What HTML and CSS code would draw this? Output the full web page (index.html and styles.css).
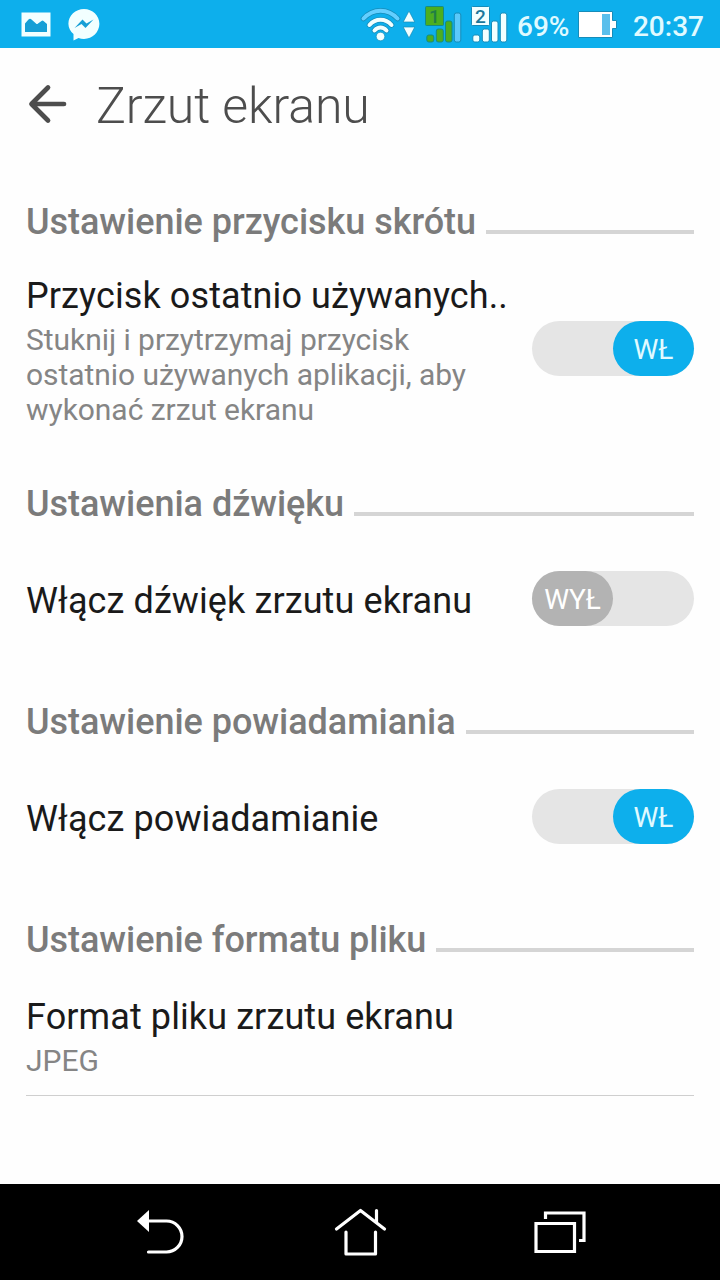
FILE: index.html
```html
<!DOCTYPE html>
<html lang="pl">
<head>
<meta charset="UTF-8">
<meta name="viewport" content="width=device-width, initial-scale=1.0">
<title>Zrzut ekranu</title>
<link rel="stylesheet" href="styles.css">
</head>
<body>

<div class="screen">
    <div class="status-bar">
        <svg class="icon-gallery" width="30" height="25" viewBox="0 0 30 25">
            <path fill="#f2ffff" d="M.5 .5H29.500V24.500H.5Z"/>
            <path fill="#159fd6" d="M4 20V11.500L7.500 7.500Q9 6 10.500 7.500L15 11.500Q16 12.500 17 11.500L20.500 9Q21.500 8 22.500 9L26 12V20Z"/>
        </svg>
        <svg class="icon-messenger" width="32" height="33" viewBox="0 0 32 33">
            <path fill="#f2ffff" d="M16 1C7.500 1 .4 7.500 .4 15.800C.4 20 2.500 23.500 5.500 26V32.500L10.500 30C12.200 30.600 14 30.900 16 30.900C24.500 30.900 31.400 24 31.400 15.800C31.400 7.500 24.500 1 16 1Z"/>
            <path fill="#159fd6" d="M6.500 20L14.500 11.500L18.500 15.500L25.500 11.500L17.500 20L13.500 16Z"/>
        </svg>
        <svg class="icon-wifi" width="56" height="36" viewBox="0 0 56 36">
            <g fill="none" stroke-linecap="round">
                <path stroke="#168cb9" stroke-width="5.500" d="M3.500 12.500C13 2 28 2 37.500 12.500M9.500 19C15.500 12 25.500 12 31.500 19M14.500 24.500C18 20.500 23 20.500 26.500 24.500"/>
                <path stroke="#63cfff" stroke-width="4" d="M3.500 12.500C13 2 28 2 37.500 12.500"/>
                <path stroke="#f2ffff" stroke-width="4" d="M9.500 19C15.500 12 25.500 12 31.500 19M14.500 24.500C18 20.500 23 20.500 26.500 24.500"/>
            </g>
            <circle cx="20.500" cy="30.500" r="4.300" fill="#f2ffff" stroke="#168cb9" stroke-width=".7"/>
            <path fill="#f2ffff" stroke="#168cb9" stroke-width=".7" stroke-linejoin="round" d="M49 5L54.800 16H43.200ZM49 32L54.800 21H43.200Z"/>
        </svg>
        <svg class="icon-signal" width="37" height="37" viewBox="0 0 37 37">
            <g fill="#4cae20" stroke="#168a82">
                <rect x="1.800" y="29" width="7" height="7" rx="2"/>
                <rect x="11.300" y="23" width="7" height="13" rx="2"/>
                <rect x="20.500" y="15" width="6.500" height="21" rx="2"/>
                <rect x="29.300" y="7" width="6.500" height="29" rx="2" fill="#5bc9fa" stroke="#168cb9"/>
                <rect x=".5" y=".5" width="18" height="19" rx="1"/>
            </g>
            <text class="sim" x="9.500" y="17" fill="#207f45">1</text>
        </svg>
        <svg class="icon-signal" width="37" height="37" viewBox="0 0 37 37">
            <g fill="#f2ffff" stroke="#168cb9">
                <rect x="1.800" y="29" width="7" height="7" rx="2"/>
                <rect x="11.300" y="23" width="7" height="13" rx="2"/>
                <rect x="20.500" y="15" width="6.500" height="21" rx="2"/>
                <rect x="29.300" y="7" width="6.500" height="29" rx="2"/>
                <rect x=".5" y=".5" width="18" height="19" rx="1"/>
            </g>
            <text class="sim" x="9.500" y="17" fill="#1c789b">2</text>
        </svg>
        <span class="percent">69%</span>
        <svg class="icon-battery" width="39" height="28" viewBox="0 0 39 28">
            <path fill="#fff" stroke="#168cb9" d="M.5 .5H34.500V9.500H38.500V17.500H34.500V26.500H.5Z"/>
            <path fill="#5abfec" d="M24 3H32V24H24Z"/>
        </svg>
        <span class="clock">20:37</span>
    </div>

    <div class="header">
        <svg width="40" height="40" viewBox="0 0 40 40">
            <path fill="none" stroke="#4d4d4d" stroke-width="4.700" stroke-linecap="round" stroke-linejoin="round" d="M20 3.500L3.500 20L20 36.500M4 20H36"/>
        </svg>
        <h1>Zrzut ekranu</h1>
    </div>

    <div class="settings">
        <h2 class="section-title">Ustawienie przycisku skrótu</h2>
        <div class="row row-tall">
            <div class="row-text">
                <div class="name">Przycisk ostatnio używanych..</div>
                <div class="summary">Stuknij i przytrzymaj przycisk<br>ostatnio używanych aplikacji, aby<br>wykonać zrzut ekranu</div>
            </div>
            <div class="toggle on"><span>WŁ</span></div>
        </div>

        <h2 class="section-title">Ustawienia dźwięku</h2>
        <div class="row">
            <div class="name">Włącz dźwięk zrzutu ekranu</div>
            <div class="toggle"><span>WYŁ</span></div>
        </div>

        <h2 class="section-title">Ustawienie powiadamiania</h2>
        <div class="row">
            <div class="name">Włącz powiadamianie</div>
            <div class="toggle on"><span>WŁ</span></div>
        </div>

        <h2 class="section-title">Ustawienie formatu pliku</h2>
        <div class="row row-last">
            <div class="row-text">
                <div class="name">Format pliku zrzutu ekranu</div>
                <div class="summary">JPEG</div>
            </div>
        </div>
    </div>

    <div class="nav-bar">
        <svg width="50" height="50" viewBox="0 0 50 50">
            <path fill="#fff" d="M1 16L13 5V27Z"/>
            <path fill="none" stroke="#fff" stroke-width="3.200" stroke-linecap="round" d="M12 16H30.500A15.500 15.500 0 0 1 30.500 47H12.500"/>
        </svg>
        <svg width="52" height="50" viewBox="0 0 52 50">
            <path fill="none" stroke="#fff" stroke-width="3.200" stroke-linecap="round" stroke-linejoin="round" d="M2.500 24L26.500 5.500L50.500 24M42.500 5.500V17.500M12 27V49H41.500V27"/>
        </svg>
        <svg width="54" height="50" viewBox="0 0 54 50">
            <path fill="none" stroke="#fff" stroke-width="3.200" d="M2 18.500H40.500V46.500H2ZM11.500 14V8H50V35.500H45"/>
        </svg>
    </div>
</div>

</body>
</html>
```
FILE: styles.css
```css
body {
    margin: 0;
    background: #fefefe;
    font-family: Roboto, "Liberation Sans", sans-serif;
}

.screen {
    width: 720px;
    height: 1280px;
    display: flex;
    flex-direction: column;
    overflow: hidden;
}

svg {
    display: block;
    flex: none;
    overflow: visible;
}

/* Status bar */
.status-bar {
    box-sizing: border-box;
    height: 48px;
    padding: 0 16px 0 21px;
    display: flex;
    align-items: center;
    background: #0dafec;
    color: #e0faff;
    font-size: 28px;
    font-weight: 500;
    white-space: nowrap;
}

.icon-messenger {
    margin-left: 17px;
}

.icon-wifi {
    margin-left: 260px;
}

.icon-signal {
    margin-left: 9px;
}

.sim {
    font-size: 19px;
    font-weight: 500;
    text-anchor: middle;
}

.percent {
    width: 61px;
    padding-left: 9px;
    padding-top: 5px;
}

.icon-battery {
    margin-top: 2px;
}

.clock {
    margin-left: auto;
    padding-top: 5px;
}

/* Title */
.header {
    box-sizing: border-box;
    height: 112px;
    padding-left: 28px;
    display: flex;
    align-items: center;
    gap: 28px;
    color: #4d4d4d;
}

.header h1 {
    margin: 0;
    padding-top: 3px;
    font-size: 50px;
    font-weight: 300;
    letter-spacing: -0.1px;
}

/* Settings list */
.settings {
    flex: 1;
    padding: 32px 26px 0;
}

.section-title {
    height: 60px;
    margin: 0;
    display: flex;
    align-items: center;
    gap: 10px;
    color: #7b7b7b;
    font-size: 36px;
    font-weight: 500;
    letter-spacing: -0.03px;
    white-space: nowrap;
}

.section-title::after {
    content: "";
    flex: 1;
    height: 4px;
    margin-top: 20px;
    background: #d5d5d5;
}

.row {
    box-sizing: border-box;
    height: 158px;
    padding-bottom: 29px;
    display: flex;
    align-items: center;
    justify-content: space-between;
}

.row-tall {
    height: 222px;
}

.row-last {
    height: 126px;
    padding-top: 4px;
    padding-bottom: 0;
    border-bottom: 1px solid #cfcfcf;
}

.name {
    padding-top: 4px;
    color: #1a1a1a;
    font-size: 36px;
    line-height: 44px;
    letter-spacing: 0.1px;
    white-space: nowrap;
}

.summary {
    margin-top: 4px;
    color: #858585;
    font-size: 30px;
    line-height: 35px;
    letter-spacing: -0.05px;
    white-space: nowrap;
}

.toggle {
    width: 162px;
    height: 55px;
    flex: none;
    display: flex;
    border-radius: 28px;
    background: #e5e5e5;
}

.toggle span {
    width: 81px;
    border-radius: 28px;
    background: #b3b3b3;
    color: #fff;
    font-size: 28px;
    line-height: 57px;
    text-align: center;
}

.toggle.on {
    justify-content: flex-end;
}

.toggle.on span {
    background: #0dafec;
    color: #e0faff;
}

/* Navigation bar */
.nav-bar {
    box-sizing: border-box;
    height: 96px;
    padding: 0 132px 4px 136px;
    display: flex;
    align-items: center;
    justify-content: space-between;
    background: #000;
}
```
